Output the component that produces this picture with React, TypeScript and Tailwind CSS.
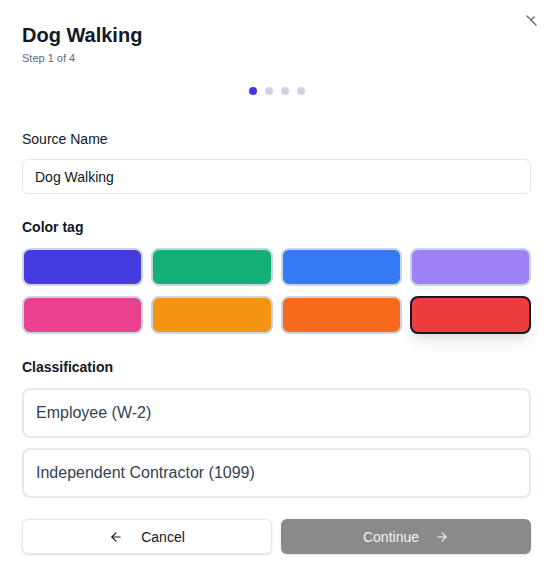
import React, { useState } from "react";

const swatches = [
  "bg-[#453be0]",
  "bg-[#12b077]",
  "bg-[#3579f4]",
  "bg-[#9e80f8]",
  "bg-[#ea4090]",
  "bg-[#f39412]",
  "bg-[#f86a1b]",
  "bg-[#ee3d3e]",
];

const classifications = ["Employee (W-2)", "Independent Contractor (1099)"];

function ArrowLeft() {
  return (
    <svg width="14" height="14" viewBox="0 0 24 24" fill="none" stroke="currentColor" strokeWidth="2" strokeLinecap="round" strokeLinejoin="round">
      <path d="M19 12H5" />
      <path d="M12 19l-7-7 7-7" />
    </svg>
  );
}

function ArrowRight() {
  return (
    <svg width="14" height="14" viewBox="0 0 24 24" fill="none" stroke="currentColor" strokeWidth="2" strokeLinecap="round" strokeLinejoin="round">
      <path d="M5 12h14" />
      <path d="M12 5l7 7-7 7" />
    </svg>
  );
}

export default function App() {
  const [name, setName] = useState("Dog Walking");
  const [color, setColor] = useState(7);
  const [kind, setKind] = useState<number | null>(null);

  return (
    <div className="relative w-[555px] h-[576px] bg-white pl-[22px] pr-6 pt-[21px] font-['Liberation_Sans',Arial,sans-serif] text-gray-900 overflow-hidden">
      <button className="absolute left-[525px] top-[13px] text-[#6b7280]">
        <svg width="14" height="14" viewBox="0 0 14 14" fill="none" stroke="currentColor" strokeWidth="1.5" strokeLinecap="round">
          <path d="M2 3l4 4" />
          <path d="M6 7l3-3" />
          <path d="M6 7l5 5" />
        </svg>
      </button>

      <h2 className="text-xl leading-7 font-bold text-[#111827]">Dog Walking</h2>
      <p className="mt-[1px] text-[11px] leading-4 text-[#5b6b84]">Step 1 of 4</p>

      <div className="mt-[21px] flex justify-center gap-2 pl-[1px]">
        <span className="h-2 w-2 rounded-full bg-[#4338e0]" />
        <span className="h-2 w-2 rounded-full bg-[#cbd5e1]" />
        <span className="h-2 w-2 rounded-full bg-[#cbd5e1]" />
        <span className="h-2 w-2 rounded-full bg-[#cbd5e1]" />
      </div>

      <label className="mt-[34px] block text-sm leading-5 text-[#111827]">Source Name</label>
      <input
        value={name}
        onChange={(e) => setName(e.target.value)}
        className="mt-[10px] block h-[35px] w-full rounded-md border border-[#e5e7eb] px-3 text-sm text-[#111827] outline-none"
      />

      <p className="mt-[23px] text-sm leading-5 font-bold text-[#111827]">Color tag</p>
      <div className="mt-[11px] grid grid-cols-4 gap-x-2 gap-y-[10px]">
        {swatches.map((c, i) => (
          <button
            key={c}
            onClick={() => setColor(i)}
            className={
              "h-[38px] rounded-lg border-2 " +
              c +
              (color === i ? " border-[#111827] shadow-lg" : " border-[#cbd5e1]")
            }
          />
        ))}
      </div>

      <p className="mt-[23px] text-sm leading-5 font-bold text-[#111827]">Classification</p>
      <div className="mt-[11px] flex flex-col gap-[10px]">
        {classifications.map((c, i) => (
          <button
            key={c}
            onClick={() => setKind(i)}
            className={
              "h-[50px] rounded-lg border-2 px-3 text-left text-base text-[#334155] " +
              (kind === i ? "border-[#4338e0]" : "border-[#e2e8f0]")
            }
          >
            {c}
          </button>
        ))}
      </div>

      <div className="mt-[21px] grid grid-cols-2 gap-[9px]">
        <button className="flex h-[35px] items-center justify-center gap-[18px] rounded-md border border-[#e5e7eb] bg-white text-sm text-[#111827] shadow-sm">
          <ArrowLeft />
          Cancel
        </button>
        <button disabled className="flex h-[35px] items-center justify-center gap-4 rounded-md bg-[#8a8a8a] text-sm text-[#f3f3f3] shadow-sm">
          Continue
          <ArrowRight />
        </button>
      </div>
    </div>
  );
}
